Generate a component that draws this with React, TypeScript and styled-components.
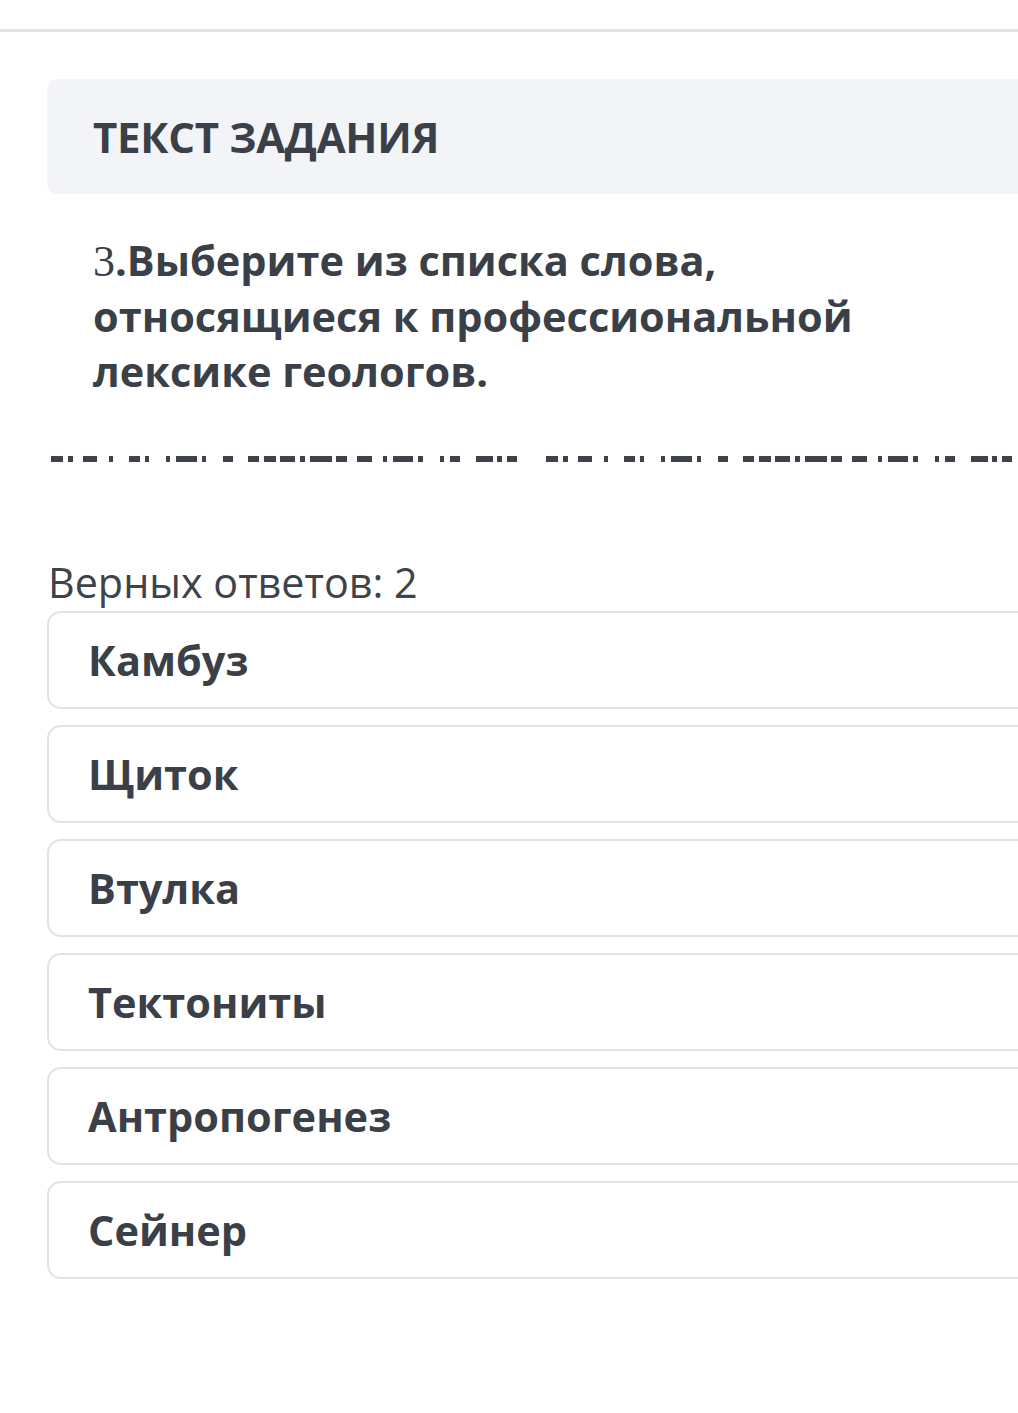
import React from 'react';
import styled, { createGlobalStyle } from 'styled-components';

const GlobalStyle = createGlobalStyle`
  html, body {
    margin: 0;
    padding: 0;
    background: #ffffff;
    overflow-x: hidden;
  }
  body {
    font-family: 'Open Sans', 'Noto Sans', sans-serif;
    color: #3a3f48;
  }
`;

const TopBar = styled.div`
  height: 29px;
  border-bottom: 3px solid #e4e4e6;
`;

const Page = styled.div`
  padding: 47px 0 0 47px;
  margin-right: -40px;
`;

const TaskHeader = styled.div`
  height: 115px;
  background: #f3f4f7;
  border-radius: 10px;
  padding-left: 46px;
  display: flex;
  align-items: center;
`;

const HeaderTitle = styled.h2`
  margin: 0;
  font-size: 42px;
  font-weight: 700;
  letter-spacing: -0.3px;
  color: #3a3f48;
`;

const Question = styled.p`
  margin: 0;
  padding: 39px 0 0 46px;
  max-width: 810px;
  font-size: 41.5px;
  line-height: 55px;
  font-weight: 700;
  color: #3a3f48;
`;

const Num = styled.span`
  font-family: 'Liberation Serif', serif;
  font-weight: 400;
  font-size: 44px;
`;

const Dashes = styled.svg`
  display: block;
  margin-top: 57px;
  width: 1000px;
  height: 6px;
`;

const Caption = styled.div`
  margin-top: 97px;
  font-size: 41.3px;
  line-height: 46px;
  font-weight: 400;
  color: #3e434b;
  margin-left: 1px;
`;

const Options = styled.div`
  margin-top: 6px;
  display: flex;
  flex-direction: column;
  gap: 16px;
`;

const Option = styled.div`
  height: 94px;
  border: 2px solid #e3e3e5;
  border-radius: 14px;
  padding-left: 39px;
  display: flex;
  align-items: center;
  font-size: 41.5px;
  font-weight: 700;
  color: #3a3f48;
  background: #ffffff;
`;

// one group of masked strokes, x relative to start, repeated once more
const dashGroup: [number, number][] = [
  [0, 12], [17, 5], [32, 14], [58, 4], [78, 11], [94, 4], [115, 4], [125, 21],
  [151, 4], [172, 10], [197, 11], [213, 12], [229, 15], [249, 5], [259, 22],
  [285, 11], [306, 15], [332, 4], [342, 20], [367, 5], [389, 4], [399, 10],
  [425, 17], [446, 5], [456, 10],
];

const answers = ['Камбуз', 'Щиток', 'Втулка', 'Тектониты', 'Антропогенез', 'Сейнер'];

export default function App() {
  return (
    <>
      <GlobalStyle />
      <TopBar />
      <Page>
        <TaskHeader>
          <HeaderTitle>ТЕКСТ ЗАДАНИЯ</HeaderTitle>
        </TaskHeader>
        <Question>
          <Num>3</Num>.Выберите из списка слова, относящиеся к профессиональной лексике геологов.
        </Question>
        <Dashes viewBox="0 0 1000 6">
          {[0, 495].map((off) =>
            dashGroup.map(([x, w], i) => (
              <rect key={`${off}-${i}`} x={x + off + 4} y={0} width={w} height={6} fill="#3d424b" />
            ))
          )}
        </Dashes>
        <Caption>Верных ответов: 2</Caption>
        <Options>
          {answers.map((a) => (
            <Option key={a}>{a}</Option>
          ))}
        </Options>
      </Page>
    </>
  );
}
